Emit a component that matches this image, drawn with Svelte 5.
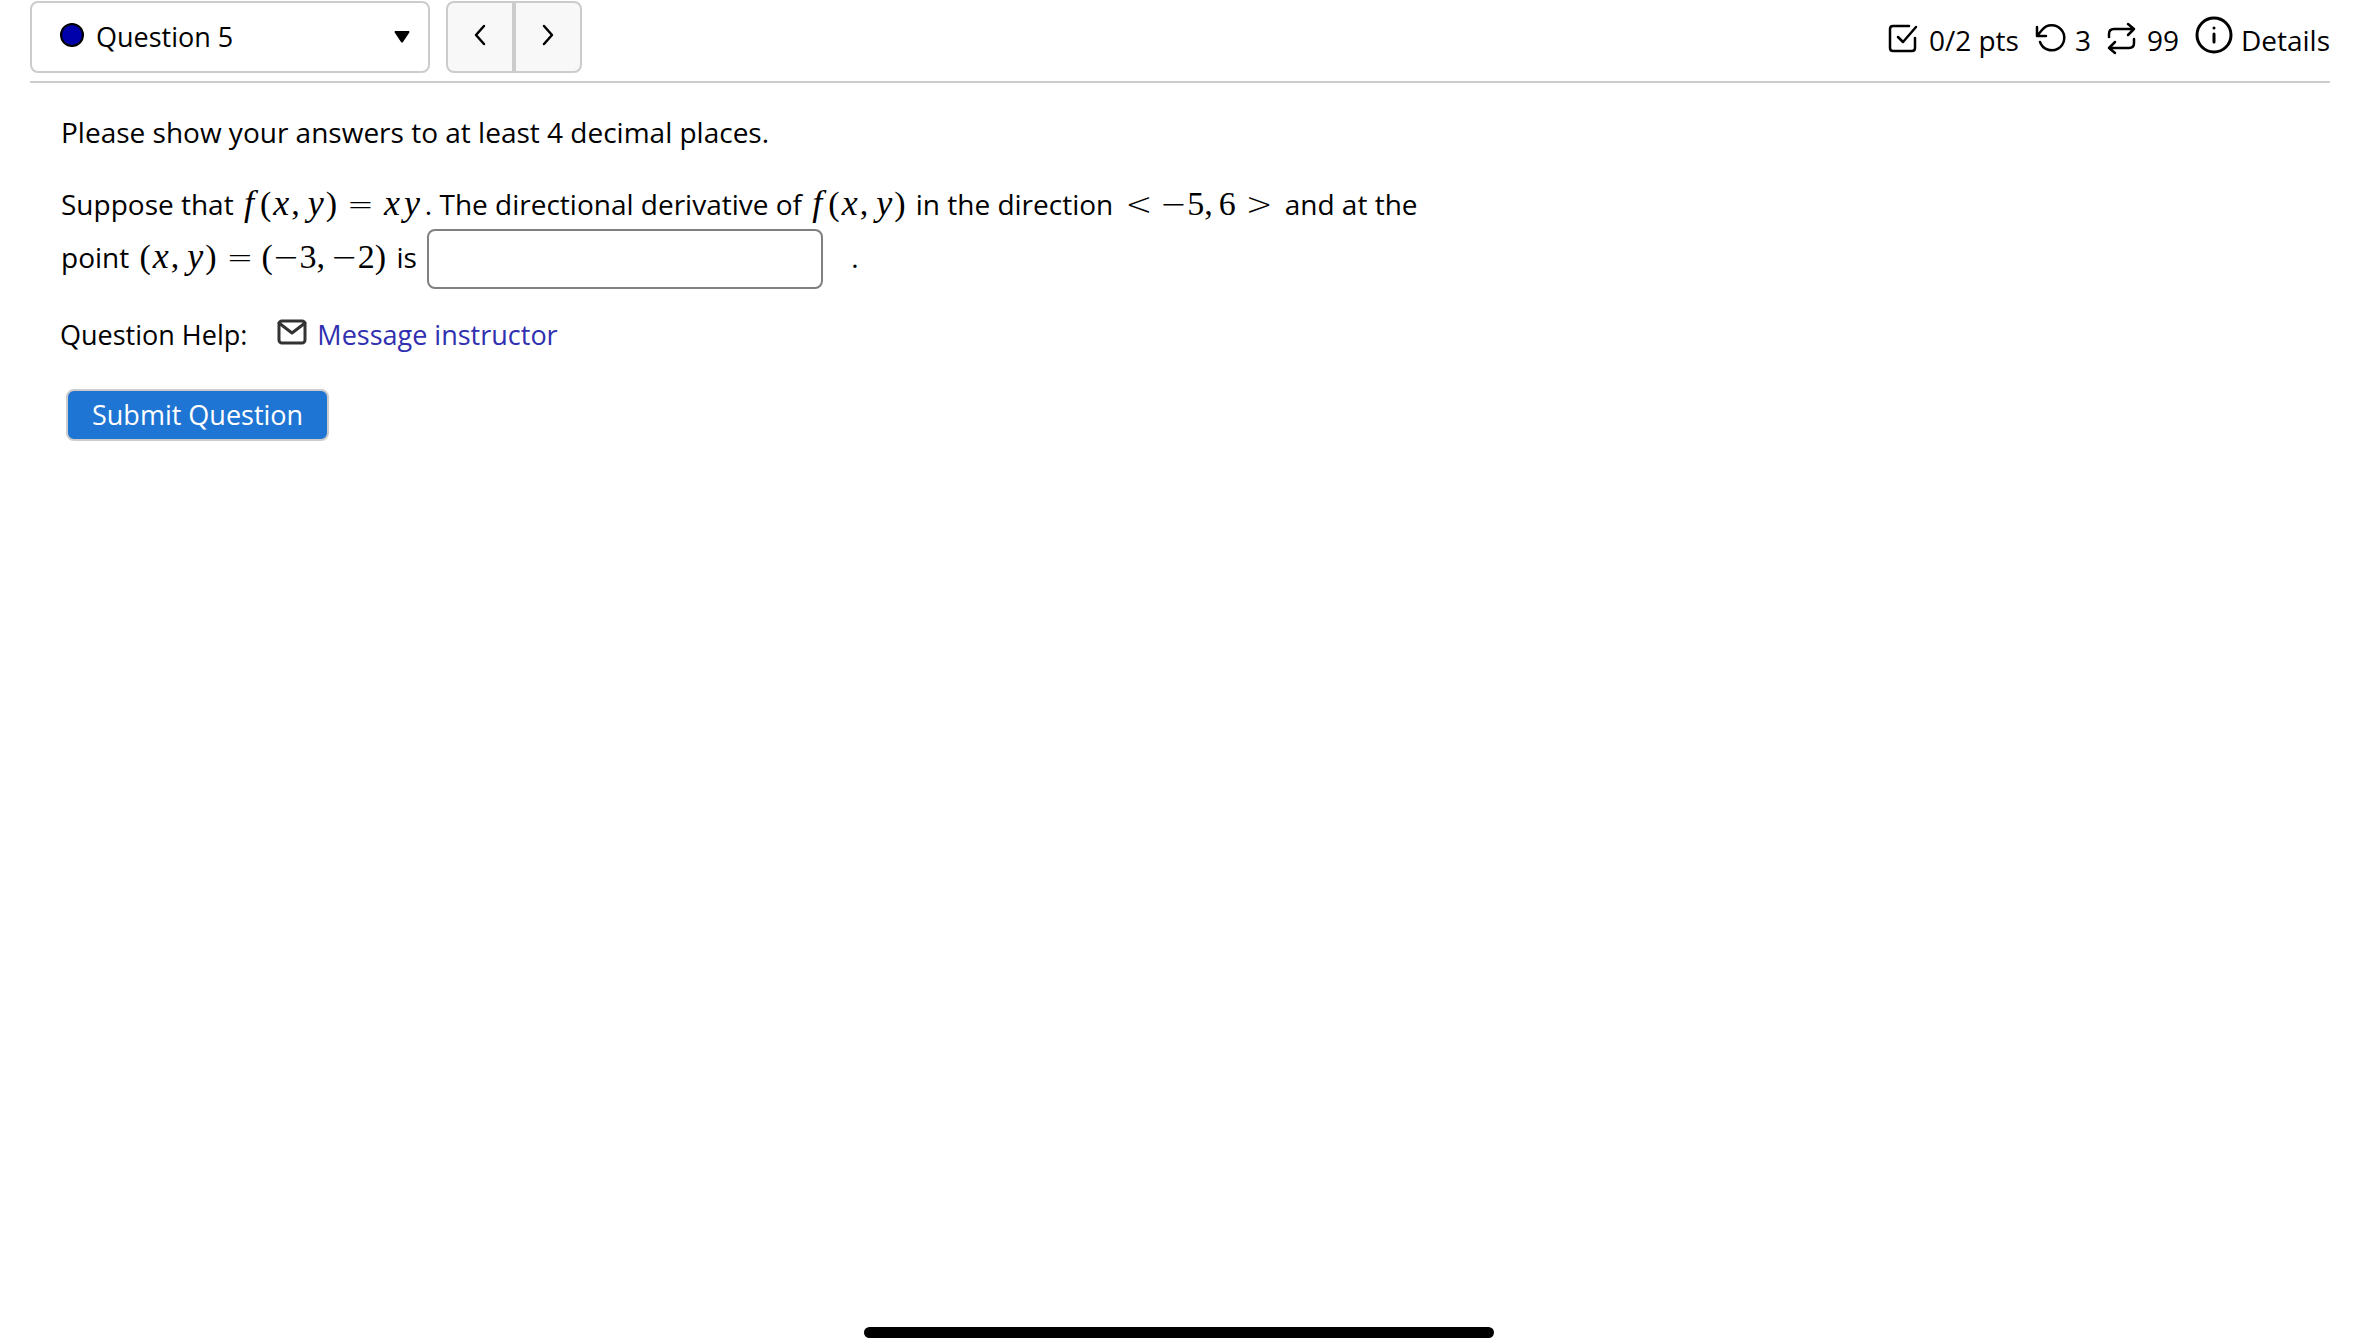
<script lang="ts">
  let question = $state("5");
  let answer = $state("");

  const questions = ["1", "2", "3", "4", "5", "6"];
</script>

<header class="bar">
  <div class="nav">
    <div class="picker">
      <span class="dot"></span>
      <select bind:value={question} aria-label="Question">
        {#each questions as q}
          <option value={q}>Question {q}</option>
        {/each}
      </select>
      <svg class="caret" viewBox="0 0 16 12"><path d="M1 0H15Q16 1 15 2L9 11Q8 12 7 11L1 2Q0 1 1 0Z" /></svg>
    </div>
    <div class="steps">
      <button aria-label="Previous question">
        <svg class="icon" viewBox="0 0 24 24"><path d="M16 3L8 12L16 21" /></svg>
      </button>
      <button aria-label="Next question">
        <svg class="icon" viewBox="0 0 24 24"><path d="M8 3L16 12L8 21" /></svg>
      </button>
    </div>
  </div>

  <div class="status">
    <span class="stat">
      <svg class="icon" viewBox="0 0 30 32"><path d="M20 4H4Q1 4 1 7V26Q1 29 4 29H23Q26 29 26 26V16M9 15L14 20L27 5" /></svg>
      0/2 pts
    </span>
    <span class="stat">
      <svg class="icon" viewBox="0 0 30 32"><path d="M2 5V14H11M2 14L7 8A12.5 12.5 0 1 1 5 20" /></svg>
      3
    </span>
    <span class="stat">
      <svg class="icon" viewBox="0 0 30 32"><path d="M2 15V12Q2 7 7 7H27M21 2L27 7L21 13M27 17V21Q27 26 22 26H2M8 20L2 26L8 31" /></svg>
      99
    </span>
    <button class="details">
      <svg class="info" viewBox="0 0 38 38">
        <circle cx="19" cy="19" r="17" />
        <path d="M19 18V26M19 12V12" />
      </svg>
      Details
    </button>
  </div>
</header>

<main>
  <p>Please show your answers to at least 4 decimal places.</p>

  <!-- The problem text, with the answer box in its last line -->
  <p class="problem">
    Suppose that <span class="math"><i class="f">f</i>(<i>x</i><span class="comma">,</span><i>y</i>)<span class="rel">=</span><i>x</i><i>y</i></span>. The directional derivative of
    <span class="math"><i class="f">f</i>(<i>x</i><span class="comma">,</span><i>y</i>)</span> in the direction
    <span class="math"><span class="rel first">&lt;</span><span class="minus">−</span>5<span class="comma">,</span>6<span class="rel last">&gt;</span></span> and at the<br />
    <label for="answer">point <span class="math">(<i>x</i><span class="comma">,</span><i>y</i>)<span class="rel">=</span>(<span class="minus">−</span>3<span class="comma">,</span><span class="minus">−</span>2)</span> is</label>
    <input id="answer" type="text" autocomplete="off" bind:value={answer} /><span class="stop">.</span>
  </p>

  <div class="help">
    <span>Question Help:</span>
    <a href="#message">
      <svg class="mail" viewBox="0 0 30 26"><rect x="2" y="2" width="26" height="22" rx="3" /><path d="M2 4L15 14L28 4" /></svg>
      Message instructor
    </a>
  </div>

  <button class="submit">Submit Question</button>
</main>

<div class="home"></div>

<style>
  :global(body) {
    margin: 0;
    background: #fff;
    color: #000;
  }

  :global(#app) {
    font: 27px/36px "Open Sans", sans-serif;
  }

  button,
  input,
  select {
    font: inherit;
    color: inherit;
    box-sizing: border-box;
  }

  .bar {
    display: flex;
    justify-content: space-between;
    align-items: flex-start;
    margin: 0 28px 0 30px;
    padding: 1px 0 8px;
    border-bottom: 2px solid #ccc;
  }

  .nav {
    display: flex;
    gap: 16px;
  }

  .picker {
    display: flex;
    align-items: center;
    box-sizing: border-box;
    width: 400px;
    height: 72px;
    padding: 0 18px 0 28px;
    border: 2px solid #ccc;
    border-radius: 8px;
  }

  .dot {
    box-sizing: border-box;
    width: 24px;
    height: 24px;
    margin-bottom: 4px;
    border: 2px solid #000;
    border-radius: 50%;
    background: #00a;
  }

  select {
    flex: 1;
    height: 64px;
    padding: 0 12px;
    border: 0;
    background: none;
    appearance: none;
  }

  .caret {
    width: 16px;
    height: 12px;
    pointer-events: none;
  }

  .steps {
    display: flex;
  }

  .steps button {
    display: flex;
    align-items: center;
    justify-content: center;
    width: 68px;
    height: 72px;
    padding: 0 0 4px;
    border: 2px solid #ccc;
    border-radius: 8px 0 0 8px;
    background: #f8f8f8;
  }

  .steps button + button {
    border-radius: 0 8px 8px 0;
  }

  .steps svg {
    width: 24px;
    height: 24px;
  }

  svg.icon,
  svg.info,
  svg.mail {
    fill: none;
    stroke: #000;
    stroke-width: 2.5;
    stroke-linecap: round;
    stroke-linejoin: round;
  }

  svg.icon {
    overflow: visible;
  }

  .status {
    display: flex;
    gap: 16px;
    padding-top: 21px;
    font-size: 28px;
  }

  .stat {
    display: flex;
    gap: 10px;
  }

  .stat svg {
    width: 30px;
    height: 32px;
  }

  .details {
    display: flex;
    gap: 8px;
    padding: 0;
    border: 0;
    background: none;
  }

  .details svg {
    width: 38px;
    height: 38px;
    margin-top: -6px;
    stroke-width: 3;
  }

  main {
    padding: 31px 60px 0;
  }

  p {
    margin: 0;
    padding: 0 1px;
    font-size: 28px;
  }

  .problem {
    padding-top: 28px;
    line-height: 52px;
  }

  .math {
    padding: 0 3px;
    font-family: "Liberation Serif", serif;
    font-size: 34px;
    line-height: 36px;
    white-space: nowrap;
  }

  .math i {
    padding: 0 2px;
    font-size: 36px;
  }

  .math .f {
    padding: 0 6px 0 0;
  }

  .comma {
    padding-right: 6px;
  }

  .rel,
  .minus {
    font-family: "DejaVu Sans", sans-serif;
    font-weight: 200;
    font-size: 32px;
  }

  .rel {
    padding: 0 8px 0 10px;
  }

  .rel.first {
    padding-left: 2px;
  }

  .rel.last {
    padding-right: 2px;
  }

  input {
    width: 396px;
    height: 60px;
    margin: -1px 0 1px 3px;
    padding: 4px 12px;
    border: 2px solid #808080;
    border-radius: 8px;
    vertical-align: middle;
  }

  .stop {
    padding-left: 28px;
  }

  .help {
    display: flex;
    gap: 30px;
    padding-top: 27px;
  }

  .help a {
    display: flex;
    gap: 10px;
    color: #3030b0;
    text-decoration: none;
  }

  .mail {
    width: 30px;
    height: 26px;
    margin-top: 2px;
  }

  svg.mail {
    stroke: #333;
    stroke-width: 3;
  }

  .submit {
    height: 52px;
    margin: 36px 6px;
    padding: 0 24px;
    border: 2px solid #ccc;
    border-radius: 8px;
    background: #1f75d3;
    color: #fff;
  }

  .home {
    position: fixed;
    bottom: 5px;
    left: 50%;
    width: 630px;
    height: 11px;
    border-radius: 6px;
    background: #000;
    transform: translateX(-50%);
  }
</style>
